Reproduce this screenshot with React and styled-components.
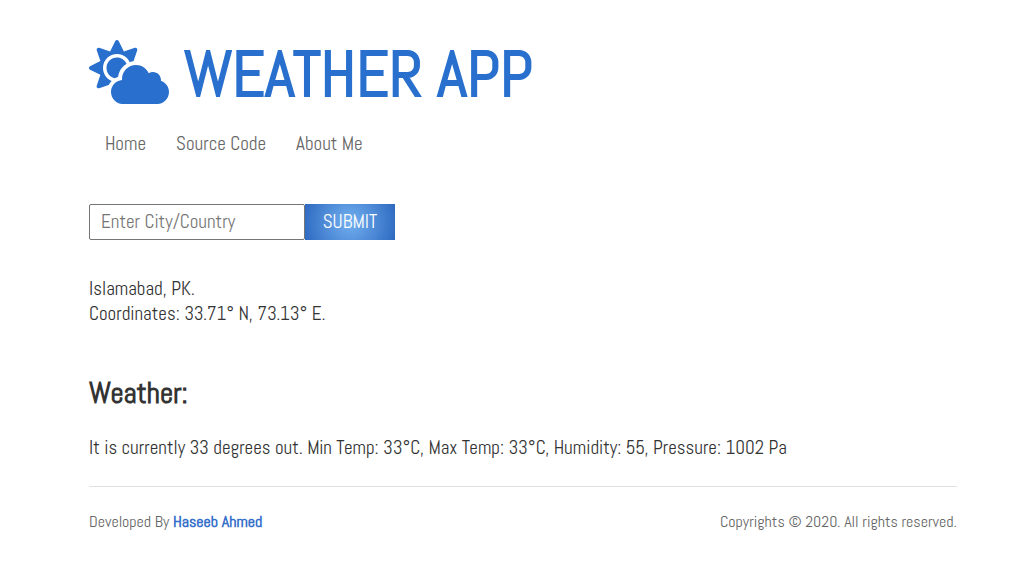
import React from 'react';
import styled, { createGlobalStyle } from 'styled-components';
import { FaCloudSun } from 'react-icons/fa';

const GlobalStyle = createGlobalStyle`
  * { box-sizing: border-box; }
  body {
    margin: 0;
    background: #fff;
    color: #333;
    font: 19px/25px Abel, "Liberation Sans Narrow", "Roboto Condensed", Roboto, sans-serif;
  }
`;

const Page = styled.div`
  padding: 40px 78px 40px 89px;
`;

const Brand = styled.header`
  display: flex;
  align-items: center;
  gap: 15px;
  height: 64px;
  color: #286fce;
`;

const Logo = styled(FaCloudSun)`
  width: 80px;
  height: 64px;
  flex: none;
`;

const Title = styled.h1`
  margin: 0;
  padding-top: 4px;
  font-size: 64px;
  line-height: 64px;
  font-weight: 700;
  white-space: nowrap;
`;

const Nav = styled.nav`
  display: flex;
  gap: 30px;
  margin-top: 27px;
  padding-left: 16px;
`;

const NavLink = styled.a`
  color: #666;
  text-decoration: none;
`;

const Search = styled.form`
  display: flex;
  height: 36px;
  margin-top: 48px;
`;

const CityInput = styled.input`
  width: 216px;
  padding: 0 11px 2px;
  border: 1px solid #767676;
  border-radius: 2px;
  background: #fff;
  color: #333;
  font: inherit;
  &::placeholder { color: #757575; opacity: 1; }
`;

const Submit = styled.button`
  width: 90px;
  padding: 0 0 2px;
  border: 0;
  background: radial-gradient(circle, #72b0f0, #2e69c0);
  color: #fff;
  font: inherit;
`;

const Place = styled.p`
  margin: 36px 0 0;
`;

const Heading = styled.h2`
  margin: 50px 0 0;
  font-size: 29px;
  line-height: 36px;
  font-weight: 700;
`;

const Report = styled.p`
  margin: 23px 0 0;
`;

const Footer = styled.footer`
  display: flex;
  justify-content: space-between;
  margin-top: 26px;
  padding-top: 22px;
  border-top: 1px solid #e1e1e1;
  color: #666;
  font-size: 16px;
`;

const Author = styled.a`
  color: #356fca;
  font-weight: 700;
  text-decoration: none;
`;

export default function App() {
  return (
    <Page>
      <GlobalStyle />
      <Brand>
        <Logo aria-hidden="true" />
        <Title>WEATHER APP</Title>
      </Brand>
      <Nav>
        <NavLink href="#home">Home</NavLink>
        <NavLink href="#source">Source Code</NavLink>
        <NavLink href="#about">About Me</NavLink>
      </Nav>
      <main>
        <Search onSubmit={(e) => e.preventDefault()}>
          <CityInput type="text" aria-label="City or country" placeholder="Enter City/Country" />
          <Submit type="submit">SUBMIT</Submit>
        </Search>
        <Place>
          Islamabad, PK.
          <br />
          Coordinates: 33.71° N, 73.13° E.
        </Place>
        <Heading>Weather:</Heading>
        <Report>
          It is currently 33 degrees out. Min Temp: 33°C, Max Temp: 33°C, Humidity: 55, Pressure: 1002 Pa
        </Report>
      </main>
      <Footer>
        <span>
          Developed By <Author href="#author">Haseeb Ahmed</Author>
        </span>
        <span>Copyrights © 2020. All rights reserved.</span>
      </Footer>
    </Page>
  );
}
